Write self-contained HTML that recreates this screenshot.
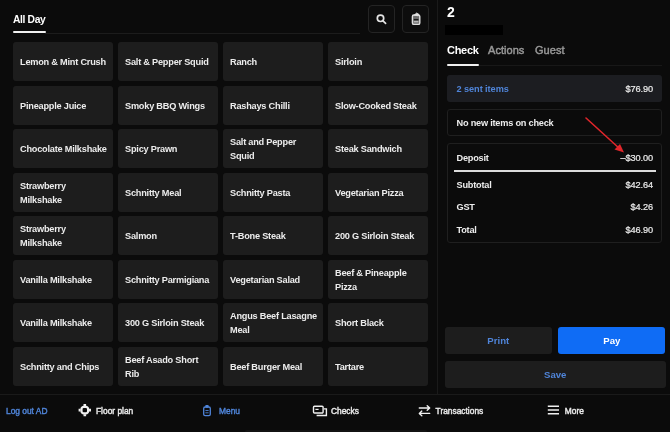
<!DOCTYPE html>
<html><head><meta charset="utf-8">
<style>
*{box-sizing:border-box;margin:0;padding:0}
html,body{width:670px;height:432px;overflow:hidden;background:#0b0b0b}
body{font-family:"Liberation Sans",sans-serif;color:#f2f2f2;position:relative;font-weight:bold}
.abs{position:absolute}
.tile{position:absolute;width:100px;height:39px;background:#1d1d1d;border-radius:3px;font-size:9.2px;line-height:13.9px;padding:3px 0 0 7px;display:flex;align-items:center;color:#ececec;white-space:nowrap;letter-spacing:-0.22px}
.hdr{position:absolute;left:13px;top:14px;font-size:10.3px;letter-spacing:-0.35px;color:#fff}
.iconbtn{position:absolute;top:5px;width:27.5px;height:27.5px;border:1px solid #242424;border-radius:4px;background:#0d0d0d}
.row{position:absolute;left:456.5px;right:17px;font-size:9.2px;letter-spacing:-0.22px;white-space:nowrap;display:flex;justify-content:space-between;color:#ececec}
.btn{position:absolute;border-radius:3px;font-size:9.6px;display:flex;align-items:center;justify-content:center;background:#1d1d1d;color:#4f84d8}
.nav{position:absolute;top:404.7px;font-size:8.4px;line-height:13px;color:#ececec;font-weight:normal;-webkit-text-stroke:0.4px;white-space:nowrap}
.amt{font-weight:normal;letter-spacing:-0.1px;-webkit-text-stroke:0.2px}
</style></head><body><div id="wrap" style="position:absolute;left:0;top:0;width:670px;height:432px;will-change:transform">
<div class="hdr">All Day</div>
<div class="abs" style="left:13px;top:31.2px;width:32.5px;height:2px;background:#f0f0f0;border-radius:1px"></div>
<div class="abs" style="left:45px;top:33px;width:315px;height:1px;background:#1c1c1c"></div>
<div class="iconbtn" style="left:368px;width:27px"></div>
<div class="iconbtn" style="left:401.5px"></div>
<svg class="abs" style="left:368px;top:5px" width="28" height="28" viewBox="0 0 28 28"><circle cx="12.5" cy="13.3" r="3.2" fill="none" stroke="#e4e4e4" stroke-width="1.7"/><path d="M15 15.8 L17.6 18.3" stroke="#e4e4e4" stroke-width="1.7" stroke-linecap="round"/></svg>
<svg class="abs" style="left:401.5px;top:5px" width="28" height="28" viewBox="0 0 28 28"><rect x="10.4" y="10" width="7.4" height="9.4" rx="1.5" fill="#6e6e6e" stroke="#e0e0e0" stroke-width="1.4"/><path d="M12.2 10.2 L14.6 8 L16.6 9 L16.4 10.8 Z" fill="#e0e0e0" stroke="#e0e0e0" stroke-width="0.8" stroke-linejoin="round"/><path d="M11.8 14.6h4.6" stroke="#1a1a1a" stroke-width="1.3"/><path d="M11.8 16.8h4.6" stroke="#d8d8d8" stroke-width="1"/></svg>

<div class="tile" style="left:13px;top:42px"><span>Lemon &amp; Mint Crush</span></div>
<div class="tile" style="left:118px;top:42px"><span>Salt &amp; Pepper Squid</span></div>
<div class="tile" style="left:223px;top:42px"><span>Ranch</span></div>
<div class="tile" style="left:328px;top:42px"><span>Sirloin</span></div>
<div class="tile" style="left:13px;top:85.5px"><span>Pineapple Juice</span></div>
<div class="tile" style="left:118px;top:85.5px"><span>Smoky BBQ Wings</span></div>
<div class="tile" style="left:223px;top:85.5px"><span>Rashays Chilli</span></div>
<div class="tile" style="left:328px;top:85.5px"><span>Slow-Cooked Steak</span></div>
<div class="tile" style="left:13px;top:129px"><span>Chocolate Milkshake</span></div>
<div class="tile" style="left:118px;top:129px"><span>Spicy Prawn</span></div>
<div class="tile" style="left:223px;top:129px"><span>Salt and Pepper<br>Squid</span></div>
<div class="tile" style="left:328px;top:129px"><span>Steak Sandwich</span></div>
<div class="tile" style="left:13px;top:172.5px"><span>Strawberry<br>Milkshake</span></div>
<div class="tile" style="left:118px;top:172.5px"><span>Schnitty Meal</span></div>
<div class="tile" style="left:223px;top:172.5px"><span>Schnitty Pasta</span></div>
<div class="tile" style="left:328px;top:172.5px"><span>Vegetarian Pizza</span></div>
<div class="tile" style="left:13px;top:216px"><span>Strawberry<br>Milkshake</span></div>
<div class="tile" style="left:118px;top:216px"><span>Salmon</span></div>
<div class="tile" style="left:223px;top:216px"><span>T-Bone Steak</span></div>
<div class="tile" style="left:328px;top:216px"><span>200 G Sirloin Steak</span></div>
<div class="tile" style="left:13px;top:259.5px"><span>Vanilla Milkshake</span></div>
<div class="tile" style="left:118px;top:259.5px"><span>Schnitty Parmigiana</span></div>
<div class="tile" style="left:223px;top:259.5px"><span>Vegetarian Salad</span></div>
<div class="tile" style="left:328px;top:259.5px"><span>Beef &amp; Pineapple<br>Pizza</span></div>
<div class="tile" style="left:13px;top:303px"><span>Vanilla Milkshake</span></div>
<div class="tile" style="left:118px;top:303px"><span>300 G Sirloin Steak</span></div>
<div class="tile" style="left:223px;top:303px"><span>Angus Beef Lasagne<br>Meal</span></div>
<div class="tile" style="left:328px;top:303px"><span>Short Black</span></div>
<div class="tile" style="left:13px;top:346.5px"><span>Schnitty and Chips</span></div>
<div class="tile" style="left:118px;top:346.5px"><span>Beef Asado Short<br>Rib</span></div>
<div class="tile" style="left:223px;top:346.5px"><span>Beef Burger Meal</span></div>
<div class="tile" style="left:328px;top:346.5px"><span>Tartare</span></div>

<div class="abs" style="left:437px;top:0;width:1px;height:394px;background:#1a1a1a"></div>
<div class="abs" style="left:447px;top:4px;font-size:14px;color:#fff">2</div>
<div class="abs" style="left:445.3px;top:25px;width:57.3px;height:10px;background:#000"></div>
<div class="abs" style="left:447px;top:44px;font-size:11px;color:#fff;letter-spacing:-0.3px">Check</div>
<div class="abs" style="left:488px;top:44px;font-size:11px;color:#989898;font-weight:normal;-webkit-text-stroke:0.45px #989898;letter-spacing:0.05px">Actions</div>
<div class="abs" style="left:535px;top:44px;font-size:11px;color:#989898;font-weight:normal;-webkit-text-stroke:0.45px #989898;letter-spacing:0.05px">Guest</div>
<div class="abs" style="left:447px;top:64px;width:32px;height:2px;background:#f0f0f0;border-radius:1px"></div>
<div class="abs" style="left:479px;top:65px;width:183px;height:1px;background:#181818"></div>

<div class="abs" style="left:447px;top:75px;width:215px;height:27px;background:#1c1d21;border-radius:3px"></div>
<div class="row" style="top:83.7px"><span style="color:#4f84d8;letter-spacing:-0.07px">2 sent items</span><span class="amt">$76.90</span></div>
<div class="abs" style="left:447px;top:109px;width:215px;height:27px;border:1px solid #1f1f1f;border-radius:3px"></div>
<div class="row" style="top:118px"><span>No new items on check</span></div>
<div class="abs" style="left:447px;top:143px;width:215px;height:100px;border:1px solid #1f1f1f;border-radius:3px"></div>
<div class="row" style="top:152.7px"><span>Deposit</span><span class="amt">–$30.00</span></div>
<div class="abs" style="left:454px;top:170.2px;width:202px;height:1.6px;background:#dcdcdc"></div>
<div class="row" style="top:180px"><span>Subtotal</span><span class="amt">$42.64</span></div>
<div class="row" style="top:202px"><span>GST</span><span class="amt">$4.26</span></div>
<div class="row" style="top:224.7px"><span>Total</span><span class="amt">$46.90</span></div>
<svg class="abs" style="left:580px;top:110px" width="50" height="50" viewBox="580 110 50 50"><path d="M586 118 L620 149" stroke="#e0262b" stroke-width="1.6" stroke-linecap="round"/><path d="M624 152.5 L614.5 149.5 L620 144 Z" fill="#e0262b"/></svg>

<div class="btn" style="left:445px;top:327px;width:106.6px;height:27px">Print</div>
<div class="btn" style="left:558.3px;top:327px;width:107.2px;height:27px;background:#0f6cf5;color:#fff">Pay</div>
<div class="btn" style="left:445px;top:361px;width:220.5px;height:26.5px">Save</div>

<div class="abs" style="left:0;top:394px;width:670px;height:1px;background:#1a1a1a"></div>
<div class="abs" style="left:245px;top:430.4px;width:182px;height:3px;background:#131313;border-radius:2px 2px 0 0"></div>
<div class="nav" style="left:6px;color:#4f84d8">Log out AD</div>
<div class="nav" style="left:96px">Floor plan</div>
<div class="nav" style="left:219px;color:#4f84d8">Menu</div>
<div class="nav" style="left:331px">Checks</div>
<div class="nav" style="left:435.6px">Transactions</div>
<div class="nav" style="left:564.8px">More</div>
<svg class="abs" style="left:0;top:395px" width="670" height="37" viewBox="0 395 670 37">
<g transform="translate(84.8 410.1)"><rect x="-3.3" y="-3.3" width="6.6" height="6.6" rx="2.2" fill="none" stroke="#f0f0f0" stroke-width="2.2"/><path d="M0 -6.2v2M0 6.2v-2M-6.2 0h2M6.2 0h-2" stroke="#f0f0f0" stroke-width="2.6"/></g>
<g transform="translate(207 410.8)"><rect x="-3.3" y="-3.8" width="6.6" height="8.6" rx="1.4" fill="none" stroke="#4f84d8" stroke-width="1.3"/><rect x="-1.7" y="-5.8" width="3.4" height="2.8" rx="0.8" fill="#4f84d8"/><path d="M-1.6 -0.3h3.2M-1.6 2h3.2" stroke="#4f84d8" stroke-width="0.9"/></g>
<g transform="translate(320 410.8)" fill="none" stroke="#f0f0f0" stroke-width="1.4"><rect x="-6.5" y="-4.6" width="9.6" height="6.8" rx="1"/><path d="M-3.4 4.7h9.8v-6.6h-2.6"/><path d="M-4.6 -1.4h3.2" stroke-width="1.2"/></g>
<g transform="translate(424.5 410.7)" fill="none" stroke="#f0f0f0" stroke-width="1.4" stroke-linecap="round" stroke-linejoin="round"><path d="M-5.2 -2.7h10M2.7 -5l2.5 2.3-2.5 2.3M5.2 2.7h-10M-2.7 0.4l-2.5 2.3 2.5 2.3"/></g>
<g transform="translate(553.4 410)" stroke="#f0f0f0" stroke-width="1.5"><path d="M-5.6 -3.7h11.2M-5.6 0h11.2M-5.6 3.7h11.2"/></g>
</svg>
</div></body></html>
